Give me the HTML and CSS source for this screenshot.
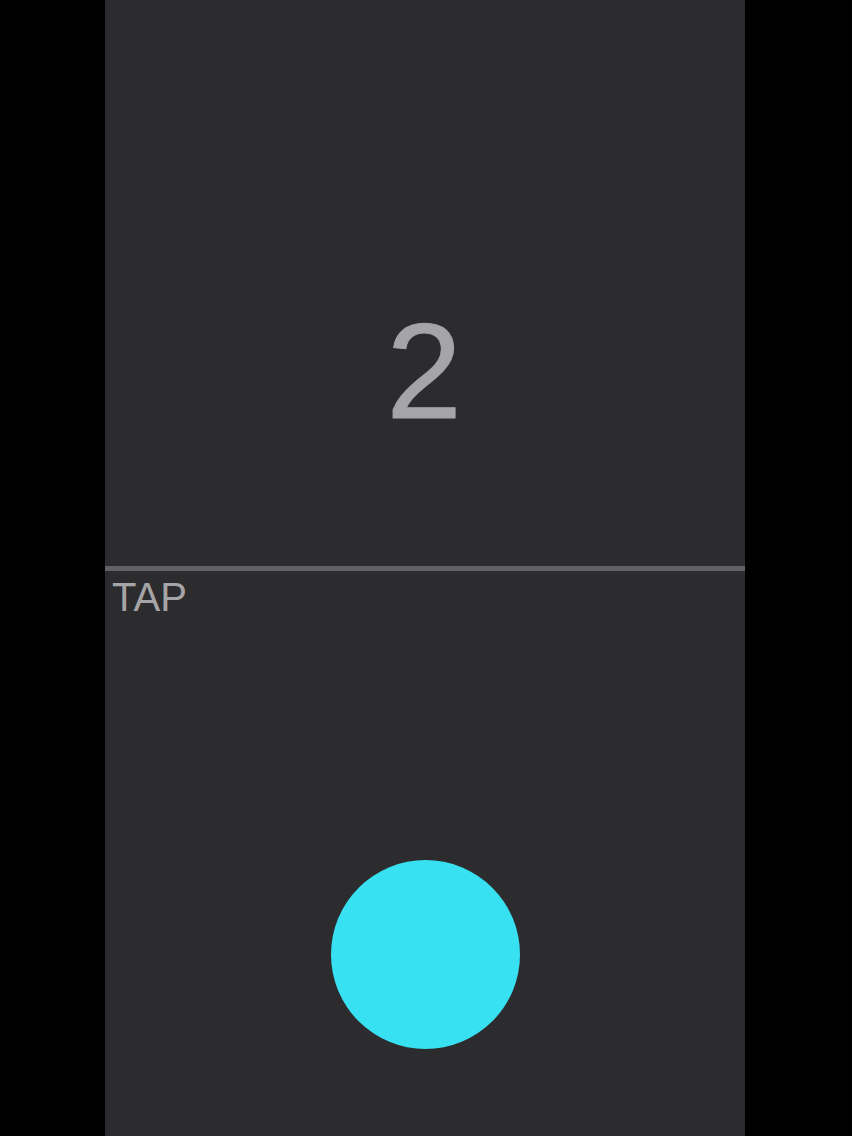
FILE: index.html
```html
<!DOCTYPE html>
<html lang="en">
<head>
<meta charset="utf-8">
<title>Tap Counter</title>
<link rel="stylesheet" href="styles.css">
</head>
<body>
  <main class="screen">
    <section class="counter">
      <div class="count">2</div>
    </section>
    <div class="divider"></div>
    <section class="pad">
      <div class="pad-label">TAP</div>
      <div class="pad-area">
        <div class="tap-button"></div>
      </div>
    </section>
  </main>
</body>
</html>
```
FILE: styles.css
```css
html, body {
  margin: 0;
  padding: 0;
  background: #000;
  height: 100%;
}

body {
  font-family: "Liberation Sans", Arial, Helvetica, sans-serif;
  overflow: hidden;
}

.screen {
  width: 640px;
  height: 1136px;
  margin-left: 105px;
  background: #2c2b2d;
  display: flex;
  flex-direction: column;
}

.counter {
  height: 566px;
  box-sizing: border-box;
  padding-top: 303px;
  display: flex;
  justify-content: center;
}

.count {
  font-size: 136px;
  line-height: 1;
  color: #a5a4a6;
  margin-left: -2px;
  -webkit-text-stroke: 1px #a5a4a6;
}

.divider {
  height: 5px;
  background: #626164;
}

.pad {
  flex: 1;
  display: flex;
  flex-direction: column;
}

.pad-label {
  padding: 6px 0 0 7px;
  font-size: 40px;
  line-height: 1;
  color: #a5a4a6;
}

.pad-area {
  display: flex;
  justify-content: center;
  padding-top: 243px;
}

.tap-button {
  width: 189px;
  height: 189px;
  border-radius: 50%;
  background: #38e1f1;
}
```
